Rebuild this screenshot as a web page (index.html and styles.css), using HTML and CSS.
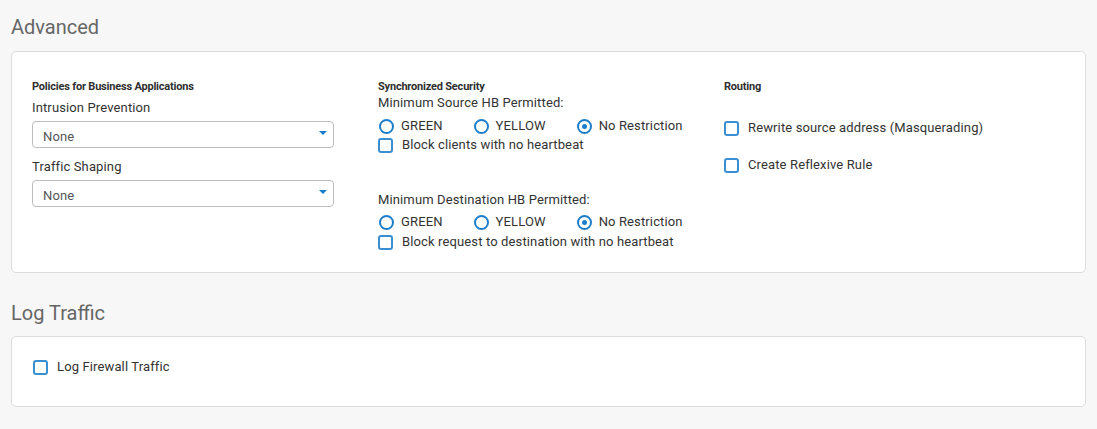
FILE: index.html
```html
<!DOCTYPE html>
<html>
<head>
<meta charset="utf-8">
<link rel="stylesheet" href="styles.css">
</head>
<body>
<h2 class="section-title">Advanced</h2>
<div class="card card-adv">
  <div class="col">
    <div class="col-title">Policies for Business Applications</div>
    <div class="field-label first">Intrusion Prevention</div>
    <div class="select"><span class="sel-text">None</span><span class="caret"></span></div>
    <div class="field-label second">Traffic Shaping</div>
    <div class="select"><span class="sel-text">None</span><span class="caret"></span></div>
  </div>
  <div class="col">
    <div class="col-title">Synchronized Security</div>
    <div class="field-label hb">Minimum Source HB Permitted:</div>
    <div class="radio-row">
      <label class="radio"><span class="dot"></span>GREEN</label>
      <label class="radio"><span class="dot"></span>YELLOW</label>
      <label class="radio"><span class="dot checked"></span>No Restriction</label>
    </div>
    <label class="check tight"><span class="box"></span>Block clients with no heartbeat</label>
    <div class="field-label hb2">Minimum Destination HB Permitted:</div>
    <div class="radio-row r2">
      <label class="radio"><span class="dot"></span>GREEN</label>
      <label class="radio"><span class="dot"></span>YELLOW</label>
      <label class="radio"><span class="dot checked"></span>No Restriction</label>
    </div>
    <label class="check tight2"><span class="box"></span>Block request to destination with no heartbeat</label>
  </div>
  <div class="col">
    <div class="col-title">Routing</div>
    <label class="check route1"><span class="box"></span>Rewrite source address (Masquerading)</label>
    <label class="check route2"><span class="box"></span>Create Reflexive Rule</label>
  </div>
</div>
<h2 class="section-title log">Log Traffic</h2>
<div class="card card-log">
  <label class="check"><span class="box"></span>Log Firewall Traffic</label>
</div>
</body>
</html>
```
FILE: styles.css
```css
* { box-sizing: border-box; }
body {
  margin: 0;
  padding: 15px 11px 0 11px;
  background: #f7f7f7;
  font-family: Roboto, "Noto Sans", Arial, sans-serif;
  font-size: 13px;
  letter-spacing: 0.13px;
  color: #333;
}
.section-title {
  margin: 0;
  font-size: 20px;
  line-height: 24px;
  font-weight: 400;
  letter-spacing: 0;
  color: #666;
}
.section-title.log { margin-top: 28px; }
.card {
  background: #fff;
  border: 1px solid #dcdcdc;
  border-radius: 5px;
}
.card-adv {
  margin-top: 12px;
  padding: 28px 20px 20px 20px;
  display: grid;
  grid-template-columns: 346px 346px 1fr;
  height: 222px;
}
.card-log {
  margin-top: 11px;
  padding: 21px 21px 0 21px;
  height: 71px;
}
.col { display: flex; flex-direction: column; align-items: flex-start; }
.col-title {
  font-size: 11px;
  font-weight: 700;
  line-height: 14px;
  color: #2f2f2f;
  letter-spacing: -0.2px;
}
.field-label { line-height: 16px; color: #333; }
.field-label.first { margin-top: 6px; }
.field-label.second { margin-top: 11px; }
.field-label.hb { margin-top: 1px; }
.field-label.hb2 { margin-top: 38px; }
.select {
  margin-top: 5px;
  width: 302px;
  height: 27px;
  border: 1px solid #bdbdbd;
  border-radius: 4px;
  background: #fff;
  display: flex;
  align-items: center;
  justify-content: space-between;
  padding: 0 6px 0 10px;
  color: #555;
}
.sel-text { padding-top: 3px; }
.caret {
  width: 0; height: 0;
  border-left: 4.5px solid transparent;
  border-right: 4.5px solid transparent;
  border-top: 4.5px solid #1a7ccc;
  margin-top: -3px;
}
.radio-row {
  margin-top: 6px;
  display: flex;
  gap: 31px;
  height: 18px;
  align-items: center;
  padding-left: 1px;
}
.radio-row.r2 { margin-top: 5px; }
.radio { display: flex; align-items: center; gap: 7px; line-height: 18px; }
.dot {
  width: 15px; height: 15px;
  border: 2px solid #1d7fcb;
  border-radius: 50%;
  display: inline-flex;
  align-items: center;
  justify-content: center;
}
.dot.checked::after {
  content: "";
  width: 5px; height: 5px;
  border-radius: 50%;
  background: #1d7fcb;
}
.check { display: flex; align-items: center; gap: 9px; line-height: 18px; height: 18px; }
.check.tight { margin-top: 1px; }
.check.tight2 { margin-top: 2px; }
.check.route1 { margin-top: 25px; }
.check.route2 { margin-top: 19px; }
.box {
  width: 15px; height: 15px;
  border: 2px solid #3a8fd3;
  border-radius: 3px;
  background: #fff;
}
```
